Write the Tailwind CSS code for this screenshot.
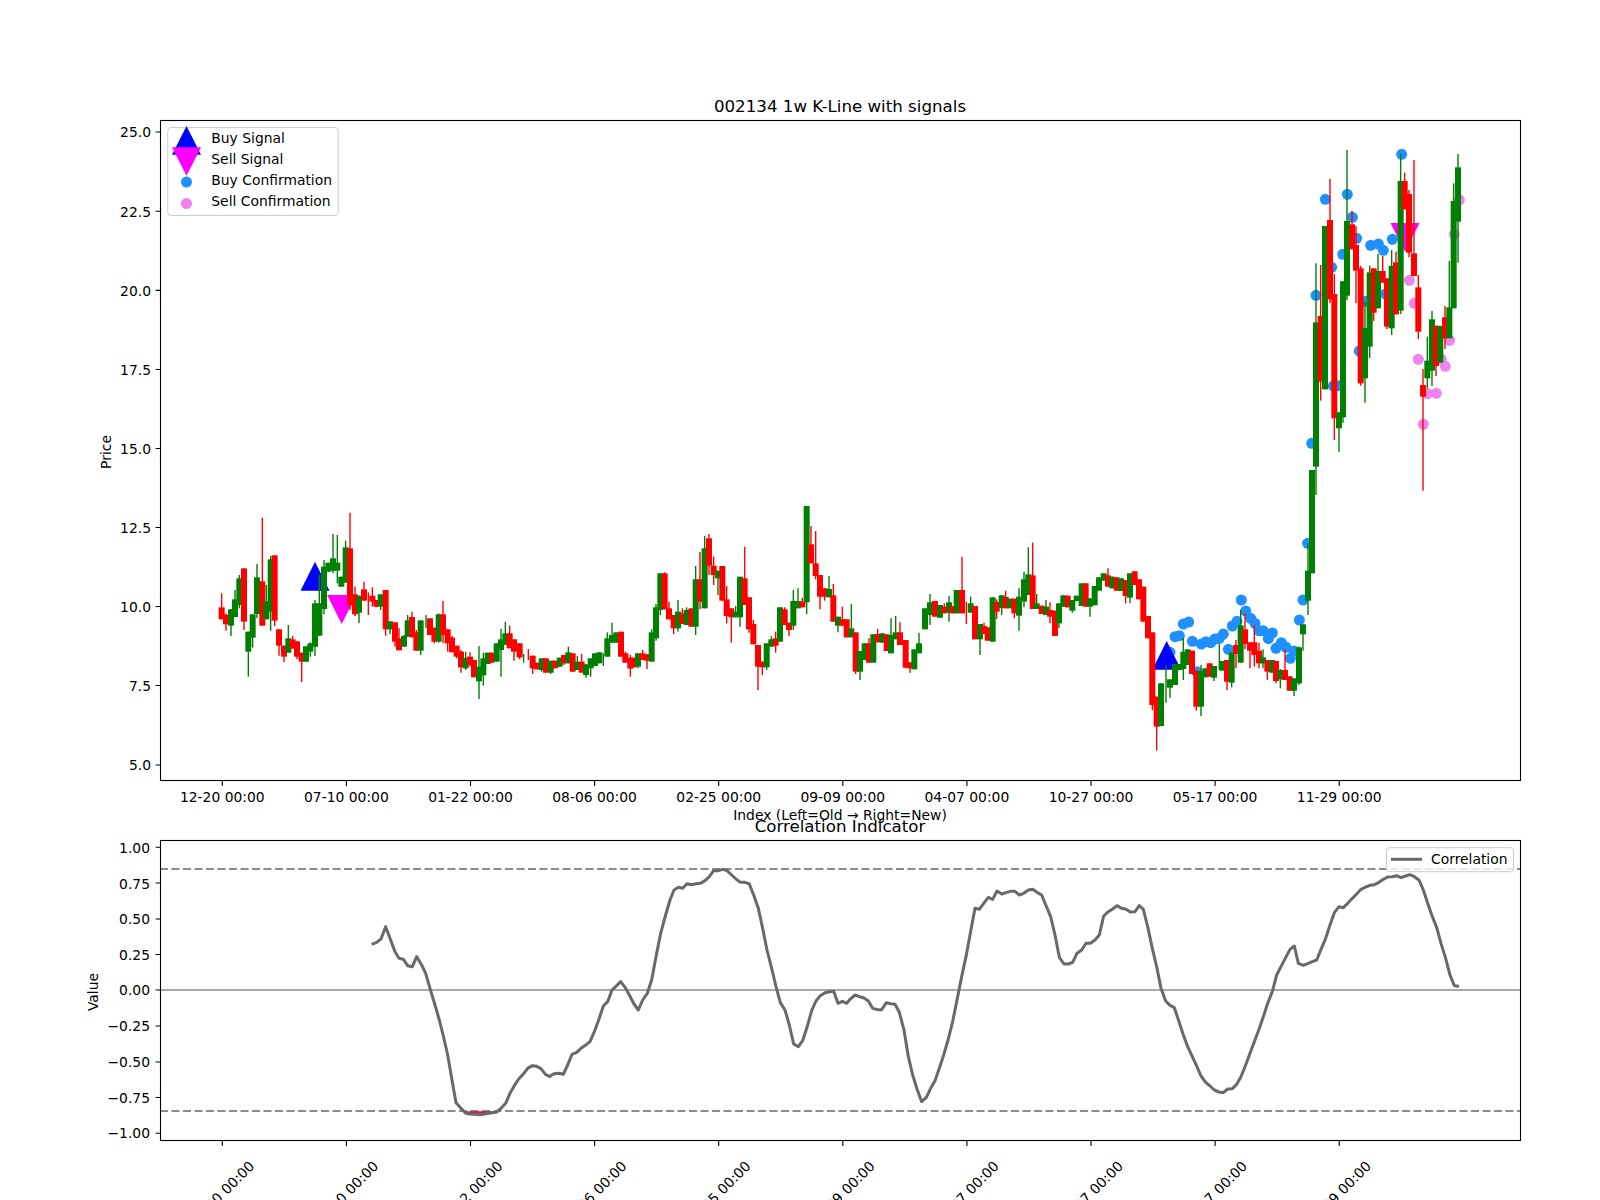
<!DOCTYPE html>
<html>
    <head>
        <meta charset="utf-8" />
        <title>002134 1w K-Line with signals</title>
        <script src="https://cdn.jsdelivr.net/npm/@tailwindcss/browser@4"></script>
    </head>
    <body class="bg-white overflow-hidden">
        <div class="w-[1600px] h-[1200px] bg-white overflow-hidden">
            <svg viewBox="0 0 1600 1200" width="1600" height="1200" class="block font-['DejaVu_Sans',sans-serif] text-[13.89px] fill-black">
                <!-- price panel -->
                <text x="840" y="112" text-anchor="middle" class="text-[16.67px]">002134 1w K-Line with signals</text>
                <g id="price-markers"></g>
                <path class="fill-[#0000ff]" d="M315 561.7L329.5 590.7H300.5ZM1166.7 641L1181.2 669.7H1152.2Z" />
                <path class="fill-[#ff00ff]" d="M327.2 595H356.2L341.7 624ZM1390.5 223H1419.5L1405 252Z" />
                <g id="candles"></g>
                <rect x="160.5" y="120.5" width="1360" height="660" fill="none" stroke="#000" stroke-width="1.1" />
                <path stroke="#000" stroke-width="1.1" d="M155.6 132h4.9M155.6 211.2h4.9M155.6 290.4h4.9M155.6 369.5h4.9M155.6 448.5h4.9M155.6 527.5h4.9M155.6 606.5h4.9M155.6 685.5h4.9M155.6 765h4.9M222.3 781v4.9M346.4 781v4.9M470.5 781v4.9M594.6 781v4.9M718.7 781v4.9M842.8 781v4.9M966.9 781v4.9M1091 781v4.9M1215.1 781v4.9M1339.2 781v4.9" />
                <g text-anchor="end">
                    <text x="151" y="137">25.0</text>
                    <text x="151" y="217">22.5</text>
                    <text x="151" y="296">20.0</text>
                    <text x="151" y="375">17.5</text>
                    <text x="151" y="454">15.0</text>
                    <text x="151" y="533">12.5</text>
                    <text x="151" y="612">10.0</text>
                    <text x="151" y="691">7.5</text>
                    <text x="151" y="770">5.0</text>
                </g>
                <g text-anchor="middle">
                    <text x="222.3" y="802">12-20 00:00</text>
                    <text x="346.4" y="802">07-10 00:00</text>
                    <text x="470.5" y="802">01-22 00:00</text>
                    <text x="594.6" y="802">08-06 00:00</text>
                    <text x="718.7" y="802">02-25 00:00</text>
                    <text x="842.8" y="802">09-09 00:00</text>
                    <text x="966.9" y="802">04-07 00:00</text>
                    <text x="1091" y="802">10-27 00:00</text>
                    <text x="1215.1" y="802">05-17 00:00</text>
                    <text x="1339.2" y="802">11-29 00:00</text>
                    <text x="840" y="820">Index (Left=Old → Right=New)</text>
                    <text transform="translate(111 452) rotate(-90)">Price</text>
                </g>
                <!-- legend -->
                <rect x="167.8" y="127.5" width="170.4" height="88" rx="3" fill="#fff" fill-opacity="0.8" stroke="#ccc" />
                <path class="fill-[#0000ff]" d="M186.5 126L201 154.7H172Z" />
                <path class="fill-[#ff00ff]" d="M172 147.3H201L186.5 175.7Z" />
                <circle cx="186.5" cy="182" r="5.5" class="fill-[#1e90ff]" />
                <circle cx="186.5" cy="203.5" r="5.5" class="fill-[#ee82ee]" />
                <text x="211.3" y="143">Buy Signal</text>
                <text x="211.3" y="164">Sell Signal</text>
                <text x="211.3" y="185">Buy Confirmation</text>
                <text x="211.3" y="206">Sell Confirmation</text>

                <!-- correlation panel -->
                <text x="840" y="832" text-anchor="middle" class="text-[16.67px]">Correlation Indicator</text>
                <path d="M160 869H1520M160 1111H1520" fill="none" stroke="#8c8c8c" stroke-width="2" stroke-dasharray="8 3.5" />
                <path d="M160 990H1520" stroke="#a9a9a9" stroke-width="2" />
                <path d="M466 1112.5H492" stroke="#dc143c" stroke-width="2.5" />
                <polyline id="correlation" fill="none" stroke="#696969" stroke-width="3" stroke-linejoin="round" />
                <rect x="160.5" y="840.5" width="1360" height="300" fill="none" stroke="#000" stroke-width="1.1" />
                <path stroke="#000" stroke-width="1.1" d="M155.6 847.3h4.9M155.6 883h4.9M155.6 919h4.9M155.6 954.5h4.9M155.6 990h4.9M155.6 1026h4.9M155.6 1062h4.9M155.6 1097.5h4.9M155.6 1133.3h4.9M222.3 1141v4.9M346.4 1141v4.9M470.5 1141v4.9M594.6 1141v4.9M718.7 1141v4.9M842.8 1141v4.9M966.9 1141v4.9M1091 1141v4.9M1215.1 1141v4.9M1339.2 1141v4.9" />
                <g text-anchor="end">
                    <text x="150" y="853">1.00</text>
                    <text x="150" y="888.5">0.75</text>
                    <text x="150" y="924">0.50</text>
                    <text x="150" y="959.5">0.25</text>
                    <text x="150" y="995">0.00</text>
                    <text x="150" y="1031">−0.25</text>
                    <text x="150" y="1067">−0.50</text>
                    <text x="150" y="1103">−0.75</text>
                    <text x="150" y="1138">−1.00</text>
                    <text transform="translate(255.2 1167) rotate(-45)">12-20 00:00</text>
                    <text transform="translate(379.3 1167) rotate(-45)">07-10 00:00</text>
                    <text transform="translate(503.4 1167) rotate(-45)">01-22 00:00</text>
                    <text transform="translate(627.5 1167) rotate(-45)">08-06 00:00</text>
                    <text transform="translate(751.6 1167) rotate(-45)">02-25 00:00</text>
                    <text transform="translate(875.7 1167) rotate(-45)">09-09 00:00</text>
                    <text transform="translate(999.8 1167) rotate(-45)">04-07 00:00</text>
                    <text transform="translate(1123.9 1167) rotate(-45)">10-27 00:00</text>
                    <text transform="translate(1248 1167) rotate(-45)">05-17 00:00</text>
                    <text transform="translate(1372.1 1167) rotate(-45)">11-29 00:00</text>
                </g>
                <text transform="translate(98 992) rotate(-90)" text-anchor="middle">Value</text>
                <rect x="1386.5" y="847.7" width="127" height="24" rx="3" fill="#fff" fill-opacity="0.8" stroke="#ccc" />
                <path d="M1391 859.3H1422" stroke="#696969" stroke-width="3" />
                <text x="1431" y="864">Correlation</text>
            </svg>
        </div>
        <script>
            // each block: left and top of the crop it was read from, values are 3x crop pixels
            var blocks = [
                [150, 480, "r 215 340 382 418 418;r 228 400 405 433 452;g 243 388 388 437 468;g 255 330 358 411 412;g 268 285 295 375 385;r 282 265 265 425 450;g 295 455 455 515 590;g 308 403 403 473 503;g 321 252 292 402 415;r 337 113 304 437 437;g 349 315 364 418 418;g 362 228 238 395 452;r 374 226 226 422 438;r 387 448 448 497 527;r 402 497 497 530 546;g 415 435 475 518 518;r 428 468 478 506 506;r 441 484 484 530 538;r 455 518 518 545 606;g 468 499 499 545 545;g 481 487 490 515 530;g 495 360 370 500 528;g 508 285 370 467 467;g 522 240 260 387 403;g 535 248 248 275 275;g 549 162 235 272 280;g 562 165 248 272 310;g 574 290 290 320 320;g 587 182 202 308 308;r 600 98 205 376 390;r 615 320 343 403 408;g 627 347 347 398 430;r 642 305 328 362 362;r 655 337 347 347 405;r 667 322 347 365 380;r 679 360 360 380 382;g 692 343 343 380 390;r 707 330 330 448 467;g 720 424 424 448 462;r 735 427 427 485 500;r 747 445 475 511 511;g 762 465 468 500 500;g 773 405 421 470 470;r 786 395 411 472 472;r 799 450 457 512 512;g 812 421 421 512 525;g 828 405 405 405 445;r 840 415 415 465 465;r 853 443 443 485 490;g 866 400 403 485 488;r 879 363 403 465 490;r 893 448 448 490 515;r 906 468 473 517 517;r 920 497 497 530 535;r 933 510 515 562 578;g 947 515 533 565 570;r 960 517 530 555 560;r 972 540 540 592 592;g 987 498 560 604 657;g 1000 518 535 586 617;g 1013 518 518 552 552;r 1025 518 518 548 548;g 1040 490 490 545 545;g 1053 447 478 510 590;g 1066 425 460 495 495;r 1079 437 460 505 505;r 1092 478 478 515 542"],
                [520, 480, "r -1 490 490 532 538;g 11 522 522 522 548;r 25 507 507 507 540;r 38 527 527 565 582;r 51 548 548 568 568;g 65 535 535 570 575;r 78 535 535 578 578;g 92 542 542 578 582;r 105 542 542 565 565;g 119 533 533 560 562;r 132 525 525 550 555;g 145 500 517 550 550;r 158 520 520 575 575;g 172 528 545 570 570;r 185 522 545 578 578;g 198 553 553 585 593;g 212 535 535 565 590;g 225 520 520 558 558;g 238 517 517 550 550;g 250 520 520 520 558;g 262 457 475 530 530;g 276 428 465 488 488;g 289 457 457 488 488;r 303 455 455 530 530;r 316 515 520 548 548;r 331 525 533 566 590;r 342 533 533 562 562;g 354 520 520 560 565;r 368 510 520 540 540;r 381 523 523 542 567;g 395 448 457 545 545;g 408 372 382 475 482;g 421 280 280 390 405;r 434 277 280 388 388;r 447 365 385 418 418;r 461 405 405 445 462;g 474 360 395 445 455;r 487 385 400 432 432;g 500 382 390 435 435;r 514 385 385 440 440;g 527 258 298 440 465;r 540 216 298 365 388;g 554 168 205 385 385;r 567 162 175 257 285;r 581 230 257 285 315;g 594 272 272 295 345;r 607 258 258 362 362;r 620 318 358 408 430;r 634 385 385 412 488;g 647 378 395 412 412;g 660 290 290 412 440;r 674 200 295 375 375;r 687 352 352 448 458;r 700 420 432 493 493;r 714 495 495 560 630;r 727 545 545 562 585;g 740 490 490 562 570;g 754 468 478 500 500;r 767 455 475 497 518;g 780 382 382 485 485;r 794 382 388 435 435;r 807 428 428 450 468;g 820 330 363 437 450;g 834 325 363 385 385;r 847 353 365 382 382;g 860 78 78 367 402;r 873 138 193 250 250;r 887 153 250 288 298;r 900 285 285 350 388;r 914 325 325 350 362;g 927 288 327 352 352;r 940 312 346 425 425;g 954 410 410 437 457;r 967 380 418 437 437;r 980 418 418 472 472;g 994 372 445 472 472;r 1007 457 457 575 582;g 1020 513 513 575 600;g 1034 490 490 540 540;r 1047 475 490 548 548;g 1060 463 463 548 548;r 1073 447 462 487 487;g 1087 460 460 488 488;r 1100 463 463 513 513;g 1113 415 465 520 520;g 1127 408 457 478 478;r 1140 427 457 495 495"],
                [900, 520, "r 17 360 360 443 445;r 30 427 427 445 458;g 43 388 388 448 448;g 57 338 370 400 400;g 75 265 265 328 328;g 90 222 247 285 315;r 105 243 243 290 290;g 120 255 255 293 293;r 133 250 260 280 280;g 147 228 247 278 305;r 157 258 258 280 280;g 170 210 210 280 280;r 186 110 210 280 280;r 199 245 245 245 312;g 212 230 250 278 278;r 225 258 258 358 358;g 240 312 312 358 405;r 252 308 318 342 342;r 263 322 322 362 362;g 278 232 232 365 365;r 290 238 246 275 297;g 305 226 226 264 285;r 317 212 231 265 265;g 330 236 236 265 265;r 343 236 236 280 295;g 357 205 230 287 332;g 372 155 178 245 262;g 385 82 163 225 225;r 398 68 166 267 267;g 410 222 250 267 267;r 425 257 257 282 282;g 438 240 260 285 285;r 450 247 270 290 310;r 465 272 272 348 348;g 477 250 250 310 325;g 490 226 226 260 260;r 503 227 227 262 262;g 517 240 240 272 278;g 530 227 227 243 243;g 545 190 190 258 258;r 557 190 190 260 260;g 570 235 235 260 290;g 584 198 198 256 256;g 597 172 172 212 212;g 611 160 160 182 182;r 624 145 166 200 200;g 637 170 170 205 205;r 650 172 172 212 212;g 663 175 175 213 213;r 677 180 180 228 250;g 690 160 160 233 250;r 704 154 154 195 195;r 717 178 178 238 238"],
                [1140, 600, "r 10 -40 -40 65 65;r 24 48 48 115 115;r 37 97 97 315 330;r 50 290 290 380 452;g 63 250 250 378 378;g 78 195 195 195 308;g 90 238 238 263 293;g 105 192 192 255 255;g 118 192 192 210 210;g 130 113 155 207 240;g 143 148 148 195 195;r 156 152 152 222 222;r 169 212 212 320 332;g 183 195 213 320 348;g 196 205 205 232 232;r 209 190 190 230 230;g 222 198 198 233 243;g 238 130 130 130 210;g 247 183 183 212 212;r 261 180 180 245 270;g 275 158 158 248 262;r 288 120 135 162 205;g 302 30 76 188 188;r 315 40 88 132 147;r 330 127 127 152 205;r 343 75 127 165 200;r 357 128 152 190 205;g 369 148 172 190 205;r 382 180 180 215 240;g 396 180 180 218 218;r 408 183 183 243 250;g 421 207 210 238 265;r 435 148 210 240 240;r 449 229 229 272 272;g 462 235 235 272 288;g 477 140 142 250 255;g 489 73 73 103 152"],
                [1270, 120, "g 114 1270 1352 1442 1485;g 126 1050 1050 1360 1360;g 138 430 607 1040 1125;r 152 435 588 785 842;g 165 318 318 808 808;r 180 177 300 538 550;r 193 462 522 895 960;g 207 877 877 925 995;g 219 484 484 892 908;g 231 90 303 527 540;r 246 272 313 388 388;r 258 318 375 452 550;r 272 438 445 790 797;g 285 545 624 775 848;g 299 437 457 680 714;r 311 445 445 578 603;g 324 402 453 565 565;r 338 408 453 488 488;r 351 475 475 620 627;g 365 390 438 625 645;r 378 395 427 583 583;g 392 100 183 572 582;r 404 158 183 268 268;r 417 210 222 398 412;r 432 120 400 468 468;r 445 465 502 635 657;r 459 747 795 830 1112;g 472 650 722 775 806;g 486 573 598 752 798;r 498 617 617 738 768;g 511 618 618 728 728;r 525 558 592 655 687;g 538 423 562 655 655;g 551 190 243 565 565;g 564 102 142 305 428"]
            ];
            var colors = { r: "#ff0000", g: "#008000" };
            var out = "";
            blocks.forEach(function (b) {
                b[2].split(";").forEach(function (row) {
                    var p = row.split(" ");
                    var x = b[0] + p[1] / 3, hi = b[1] + p[2] / 3, top = b[1] + p[3] / 3, bot = b[1] + p[4] / 3, lo = b[1] + p[5] / 3;
                    var c = colors[p[0]];
                    out += '<path d="M' + x + " " + hi + "V" + lo + '" stroke="' + c + '" stroke-width="1.4"/>';
                    if (bot > top) out += '<rect x="' + (x - 3) + '" y="' + top + '" width="6" height="' + (bot - top) + '" fill="' + c + '"/>';
                });
            });
            document.getElementById("candles").innerHTML = out;

            // confirmation dots, same crop units
            var dots = [
                [1140, 600, "#1e90ff", "90 157;105 110;118 107;130 72;146 66;157 124;170 215;184 132;198 125;212 128;225 117;238 115;250 102;265 148;277 78;291 64;304 0;317 33;332 55;345 70;357 92;369 92;385 116;397 99;408 145;424 128;438 142;451 175;462 153;478 60;489 0"],
                [1270, 120, "#1e90ff", "395 103;166 238;232 223;247 292;260 355;302 376;325 372;340 391;367 358;218 403;185 442;138 526;347 522;288 544;268 693;190 798;205 797;125 970;113 1270"],
                [1270, 120, "#ee82ee", "418 481;433 550;445 718;553 343;568 240;539 661;514 718;526 739;473 821;499 820;460 913"]
            ];
            var dotOut = "";
            dots.forEach(function (d) {
                d[3].split(";").forEach(function (pt) {
                    var p = pt.split(" ");
                    dotOut += '<circle cx="' + (d[0] + p[0] / 3) + '" cy="' + (d[1] + p[1] / 3) + '" r="5.5" fill="' + d[2] + '"/>';
                });
            });
            document.getElementById("price-markers").innerHTML = dotOut;

            // correlation line, same crop units
            var segments = [
                [60, 820, "935 373;950 367;963 357;977 320;990 355;1005 395;1017 415;1030 418;1043 437;1057 440;1070 410;1085 435;1097 460;1110 505;1125 555;1138 600;1150 648;1163 705;1175 775;1188 848;1203 865;1217 880;1230 882;1245 883;1258 884;1270 883;1285 880;1297 878;1310 876;1323 865;1337 850;1350 820;1363 797;1376 777;1390 762;1403 745;1417 737;1430 739;1443 746;1457 764;1470 770"],
                [550, 840, "0 708;13 701;27 700;40 703;53 675;66 643;80 637;93 625;106 616;120 605;133 575;146 540;160 498;173 485;186 450;200 437;212 425;225 442;238 465;252 492;265 510;278 480;292 460;305 420;318 350;332 280;346 228;360 180;372 150;385 142;398 145;411 131;425 134;438 131;451 130;465 122;478 110;491 92;505 92;518 88;531 92;545 105;558 117;571 127;585 127;598 132;611 165;625 205;638 265;651 330;665 385;678 440;691 488;705 510;718 555;731 612;745 620;758 602;771 562;785 512;798 483;811 467;825 458;838 455;851 454;864 490;877 484;890 490"],
                [840, 840, "30 478;45 465;58 470;72 474;85 483;98 505;112 509;125 509;139 488;152 491;165 493;178 517;192 570;205 650;218 705;232 750;245 785;259 772;272 745;285 722;298 685;311 645;325 597;338 545;351 480;365 410;378 350;391 280;405 205;418 208;431 190;445 172;458 178;471 153;485 162;498 158;511 154;525 154;538 165;551 160;565 150;578 148;591 157;605 165;618 197;632 230;645 285;658 352;672 372;685 372;698 367;711 340;725 330;738 310;751 310;765 300;778 285;791 228;805 215;818 207;831 197;845 205;858 208;871 216;885 215;898 197"],
                [1100, 820, "130 268;143 320;157 385;170 440;183 505;197 543;210 556;223 563;237 605;250 645;263 680;277 710;290 738;303 768;317 787;330 798;343 810;357 816;370 818;383 807;397 806;410 793;423 770;437 735;450 700;463 665;477 628;490 590;503 550;517 515;530 465;543 440;557 413;570 388;583 378;595 430;610 436;623 431;637 425;650 420;663 388;677 355;690 315;703 278;717 260;730 263;743 250;757 235;770 222;783 208;797 201;810 196;823 194;837 187;850 178;863 171;877 170;890 167;903 173;917 168;930 164;943 170;957 180;970 210;983 250;997 290;1010 322;1023 370;1037 415;1050 465;1063 497;1077 499"]
            ];
            var pts = [];
            segments.forEach(function (s) {
                s[2].split(";").forEach(function (pt) {
                    var p = pt.split(" ");
                    pts.push((s[0] + p[0] / 3) + "," + (s[1] + p[1] / 3));
                });
            });
            document.getElementById("correlation").setAttribute("points", pts.join(" "));
        </script>
    </body>
</html>
